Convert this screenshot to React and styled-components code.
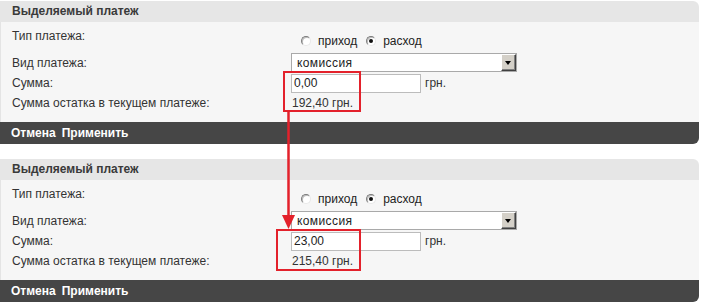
import React from 'react';
import styled, { createGlobalStyle } from 'styled-components';

const GlobalStyle = createGlobalStyle`
  body {
    margin: 0;
    background: #fff;
    font-family: 'Liberation Sans', Arial, sans-serif;
    font-size: 12px;
    color: #333;
  }
`;

const panels = [
  { amount: '0,00', rest: '192,40 грн.' },
  { amount: '23,00', rest: '215,40 грн.' },
];

const Radio = ({ checked, label }) => (
  <RadioLabel>
    <RadioDot checked={checked} />
    {label}
  </RadioLabel>
);

const PaymentPanel = ({ amount, rest }) => (
  <Panel>
    <Header>Выделяемый платеж</Header>
    <Body>
      <Row height={26}>
        <Label align="start">Тип платежа:</Label>
        <RadioGroup>
          <Radio label="приход" />
          <Radio checked label="расход" />
        </RadioGroup>
      </Row>
      <Row height={21}>
        <Label>Вид платежа:</Label>
        <Select>
          <span>комиссия</span>
          <SelectButton />
        </Select>
      </Row>
      <Row height={20}>
        <Label>Сумма:</Label>
        <Field>
          <Input>{amount}</Input>
          <Unit>грн.</Unit>
        </Field>
      </Row>
      <Row height={19}>
        <Label>Сумма остатка в текущем платеже:</Label>
        <Value>{rest}</Value>
      </Row>
    </Body>
    <Footer>
      <span>Отмена</span>
      <span>Применить</span>
    </Footer>
  </Panel>
);

const App = () => {
  return (
    <>
      <GlobalStyle />
      <Page>
        {panels.map((p, i) => (
          <PaymentPanel key={i} {...p} />
        ))}
        <Annotation viewBox="0 0 703 304">
          <rect x="284" y="72" width="76" height="39" />
          <rect x="277" y="230" width="83" height="40" />
          <line x1="288.5" y1="111" x2="288.5" y2="217" />
          <polygon points="282,215 295,215 288.5,229" />
        </Annotation>
      </Page>
    </>
  );
};

const Page = styled.div`
  position: relative;
  width: 703px;
  height: 304px;
  padding-top: 1px;
  box-sizing: border-box;
  display: flex;
  flex-direction: column;
  gap: 15px;
`;

const Panel = styled.section`
  width: 699px;
`;

const Header = styled.div`
  height: 21px;
  line-height: 21px;
  padding-left: 12px;
  background: #e6e6e6;
  border-top-right-radius: 6px;
  font-weight: bold;
  color: #3a3a3a;
`;

const Body = styled.div`
  background: #f6f6f6;
  border-left: 1px solid #e4e4e4;
  padding: 4px 0 10px 11px;
`;

const Row = styled.div`
  display: grid;
  grid-template-columns: 279px 1fr;
  height: ${({ height }) => height}px;
`;

const Label = styled.div`
  align-self: ${({ align }) => (align === 'start' ? 'start' : 'center')};
  padding-top: ${({ align }) => (align === 'start' ? '3px' : '0')};
  line-height: 14px;
  color: #333;
`;

const RadioGroup = styled.div`
  align-self: end;
  margin-bottom: 4px;
  padding-left: 10px;
  display: flex;
  gap: 9px;
  line-height: 14px;
`;

const RadioLabel = styled.span`
  display: inline-flex;
  align-items: center;
  gap: 7px;
  color: #222;
`;

const RadioDot = styled.span`
  position: relative;
  width: 10px;
  height: 10px;
  box-sizing: border-box;
  border-radius: 50%;
  background: #fff;
  border: 1px solid;
  border-color: #7a7a7a #e8e8e8 #e8e8e8 #7a7a7a;
  box-shadow: inset 1px 1px 0 #bdbdbd;
  &::after {
    content: '';
    display: ${({ checked }) => (checked ? 'block' : 'none')};
    position: absolute;
    left: 2px;
    top: 2px;
    width: 4px;
    height: 4px;
    border-radius: 50%;
    background: #111;
  }
`;

const Select = styled.div`
  align-self: center;
  width: 226px;
  height: 19px;
  box-sizing: border-box;
  border: 1px solid #a9a9a9;
  background: #fff;
  display: flex;
  align-items: center;
  justify-content: space-between;
  padding-left: 5px;
  letter-spacing: 0.4px;
  color: #222;
`;

const SelectButton = styled.span`
  position: relative;
  width: 15px;
  height: 17px;
  box-sizing: border-box;
  background: #d4d0c8;
  border: 1px solid;
  border-color: #fff #404040 #404040 #fff;
  box-shadow: inset -1px -1px 0 #808080;
  &::after {
    content: '';
    position: absolute;
    left: 3px;
    top: 6px;
    border-left: 3.5px solid transparent;
    border-right: 3.5px solid transparent;
    border-top: 4px solid #000;
  }
`;

const Field = styled.div`
  align-self: center;
  display: flex;
  align-items: center;
  gap: 4px;
`;

const Input = styled.div`
  width: 130px;
  height: 19px;
  box-sizing: border-box;
  border: 1px solid #bcbcbc;
  background: #fff;
  padding-left: 2px;
  line-height: 17px;
  color: #222;
`;

const Unit = styled.span`
  color: #333;
`;

const Value = styled.div`
  align-self: center;
  padding-left: 1px;
  line-height: 14px;
  color: #333;
`;

const Footer = styled.div`
  height: 22px;
  line-height: 22px;
  padding-left: 11px;
  background: #464646;
  border-bottom-right-radius: 6px;
  display: flex;
  gap: 6px;
  font-weight: bold;
  color: #fff;
`;

const Annotation = styled.svg`
  position: absolute;
  left: 0;
  top: 0;
  width: 703px;
  height: 304px;
  pointer-events: none;
  rect {
    fill: none;
    stroke: #e3212b;
    stroke-width: 2;
  }
  line {
    stroke: #e3212b;
    stroke-width: 2.5;
  }
  polygon {
    fill: #e3212b;
  }
`;

export default App;
